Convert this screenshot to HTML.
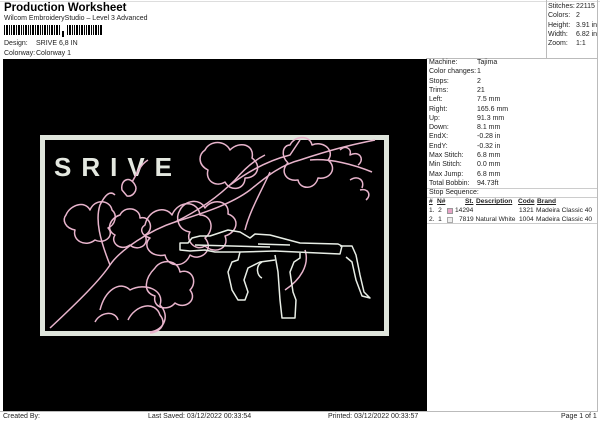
<!DOCTYPE html>
<html><head><meta charset="utf-8"><style>
*{margin:0;padding:0;box-sizing:border-box}
body{width:600px;height:424px;background:#fff;font-family:"Liberation Sans",sans-serif;color:#222;position:relative;overflow:hidden;font-size:7px}
.a{position:absolute;white-space:nowrap}
.r{position:absolute;left:429px;width:168px;height:9.3px;line-height:9.3px}
.r span{position:absolute;left:48px}
.s{font-size:6.6px}
</style></head><body>
<div class="a" style="left:4px;top:2px;font-size:11.5px;font-weight:bold;color:#000">Production Worksheet</div>
<div class="a" style="left:4px;top:15px;font-size:7px">Wilcom EmbroideryStudio – Level 3 Advanced</div>
<svg class="a" style="left:4px;top:25px" width="100" height="13">
<g fill="#000">
<rect x="0" y="0" width="1" height="10"/><rect x="2" y="0" width="2" height="10"/><rect x="5" y="0" width="1" height="10"/><rect x="7" y="0" width="1" height="10"/><rect x="9" y="0" width="2" height="10"/><rect x="12" y="0" width="1" height="10"/><rect x="14" y="0" width="2" height="10"/><rect x="17" y="0" width="1" height="10"/><rect x="19" y="0" width="1" height="10"/><rect x="21" y="0" width="2" height="10"/><rect x="24" y="0" width="1" height="10"/><rect x="26" y="0" width="1" height="10"/><rect x="28" y="0" width="2" height="10"/><rect x="31" y="0" width="1" height="10"/><rect x="33" y="0" width="2" height="10"/><rect x="36" y="0" width="1" height="10"/><rect x="38" y="0" width="1" height="10"/><rect x="40" y="0" width="2" height="10"/><rect x="43" y="0" width="1" height="10"/><rect x="45" y="0" width="1" height="10"/><rect x="47" y="0" width="2" height="10"/><rect x="50" y="0" width="1" height="10"/><rect x="52" y="0" width="2" height="10"/><rect x="55" y="0" width="1" height="10"/><rect x="58" y="6" width="2" height="6"/>
<rect x="63" y="0" width="1" height="10"/><rect x="65" y="0" width="2" height="10"/><rect x="68" y="0" width="1" height="10"/><rect x="70" y="0" width="1" height="10"/><rect x="72" y="0" width="2" height="10"/><rect x="75" y="0" width="1" height="10"/><rect x="77" y="0" width="2" height="10"/><rect x="80" y="0" width="1" height="10"/><rect x="82" y="0" width="1" height="10"/><rect x="84" y="0" width="2" height="10"/><rect x="87" y="0" width="1" height="10"/><rect x="89" y="0" width="1" height="10"/><rect x="91" y="0" width="2" height="10"/><rect x="94" y="0" width="1" height="10"/><rect x="96" y="0" width="2" height="10"/></g></svg>
<div class="a" style="left:4px;top:40px">Design:</div><div class="a" style="left:36px;top:40px">SRIVE 6,8 IN</div>
<div class="a" style="left:4px;top:50px">Colorway:</div><div class="a" style="left:36px;top:50px">Colorway 1</div>
<div class="a" style="left:0;top:1px;width:600px;height:1px;background:#ddd"></div>
<div class="a" style="left:546px;top:0;width:1px;height:58px;background:#bbb"></div>
<div class="a" style="left:597px;top:0;width:1px;height:412px;background:#bbb"></div>
<div class="a" style="left:548px;top:2px;line-height:9.3px">Stitches:<br>Colors:<br>Height:<br>Width:<br>Zoom:</div>
<div class="a" style="left:576px;top:2px;line-height:9.3px">22115<br>2<br>3.91 in<br>6.82 in<br>1:1</div>
<div class="a" style="left:426px;top:58px;width:172px;height:1px;background:#bbb"></div>
<div class="a" style="left:3px;top:59px;width:424px;height:352px;background:#000"></div>
<div class="r" style="top:58px">Machine:<span>Tajima</span></div>
<div class="r" style="top:67.3px">Color changes:<span>1</span></div>
<div class="r" style="top:76.6px">Stops:<span>2</span></div>
<div class="r" style="top:85.9px">Trims:<span>21</span></div>
<div class="r" style="top:95.2px">Left:<span>7.5 mm</span></div>
<div class="r" style="top:104.5px">Right:<span>165.6 mm</span></div>
<div class="r" style="top:113.8px">Up:<span>91.3 mm</span></div>
<div class="r" style="top:123.1px">Down:<span>8.1 mm</span></div>
<div class="r" style="top:132.4px">EndX:<span>-0.28 in</span></div>
<div class="r" style="top:141.7px">EndY:<span>-0.32 in</span></div>
<div class="r" style="top:151px">Max Stitch:<span>6.8 mm</span></div>
<div class="r" style="top:160.3px">Min Stitch:<span>0.0 mm</span></div>
<div class="r" style="top:169.6px">Max Jump:<span>6.8 mm</span></div>
<div class="r" style="top:178.9px">Total Bobbin:<span>94.73ft</span></div>
<div class="a" style="left:427px;top:187.5px;width:170px;height:1px;background:#ccc"></div>
<div class="r" style="top:188px">Stop Sequence:</div>
<div class="a" style="left:427px;top:196.5px;width:170px;height:1px;background:#ccc"></div>
<div class="a s" style="left:429px;top:197px;font-weight:bold;text-decoration:underline;line-height:9px">#</div>
<div class="a s" style="left:437px;top:197px;font-weight:bold;text-decoration:underline;line-height:9px">N#</div>
<div class="a s" style="left:465px;top:197px;font-weight:bold;text-decoration:underline;line-height:9px">St.</div>
<div class="a s" style="left:476px;top:197px;font-weight:bold;text-decoration:underline;line-height:9px">Description</div>
<div class="a s" style="left:518px;top:197px;font-weight:bold;text-decoration:underline;line-height:9px">Code</div>
<div class="a s" style="left:537px;top:197px;font-weight:bold;text-decoration:underline;line-height:9px">Brand</div>
<div class="a s" style="left:429px;top:206px;line-height:9px">1.&nbsp; 2</div>
<div class="a" style="left:447px;top:207.5px;width:6px;height:6px;background:#e7a3c6;border:1px solid #999"></div>
<div class="a s" style="left:455px;top:206px;line-height:9px">14294</div>
<div class="a s" style="left:519px;top:206px;line-height:9px">1321</div>
<div class="a s" style="left:536px;top:206px;line-height:9px">Madeira Classic 40</div>
<div class="a s" style="left:429px;top:215px;line-height:9px">2.&nbsp; 1</div>
<div class="a" style="left:447px;top:216.5px;width:6px;height:6px;background:#eee;border:1px solid #aaa"></div>
<div class="a s" style="left:459px;top:215px;line-height:9px">7819&nbsp;Natural White</div>
<div class="a s" style="left:519px;top:215px;line-height:9px">1004</div>
<div class="a s" style="left:536px;top:215px;line-height:9px">Madeira Classic 40</div>
<div class="a" style="left:427px;top:222.5px;width:170px;height:1px;background:#ccc"></div>
<div class="a" style="left:0;top:411px;width:598px;height:1px;background:#bbb"></div>
<div class="a" style="left:3px;top:413px">Created By:</div>
<div class="a" style="left:148px;top:413px">Last Saved: 03/12/2022 00:33:54</div>
<div class="a" style="left:328px;top:413px">Printed: 03/12/2022 00:33:57</div>
<div class="a" style="left:561px;top:413px">Page 1 of 1</div>
<svg class="a" style="left:0;top:0" width="600" height="424">
<rect x="42.5" y="137.5" width="344" height="196" fill="none" stroke="#dfe5dc" stroke-width="5"/>
<text x="54" y="176" font-family="Liberation Sans,sans-serif" font-size="26" font-weight="bold" fill="#e4e8e0" letter-spacing="10">SRIVE</text>
<g fill="none" stroke="#e8b4cc" stroke-width="1.5" stroke-linejoin="round">
<path d="M50 328 C80 300 100 280 110 265 C120 250 150 230 175 222 C200 214 230 205 250 190 C265 178 280 165 300 160 C330 150 350 145 375 140"/>
<path d="M110 265 C100 240 95 220 100 205 C105 195 110 190 115 195"/>
<path d="M175 222 C200 210 220 195 235 180 C245 168 255 160 265 155"/>
<path d="M230 185 C250 170 270 160 290 155 L300 140 M310 160 C330 158 355 165 372 172"/>
<path d="M66 215 C70 205 85 200 90 210 C95 198 110 200 112 210 C118 215 115 225 108 228 C115 235 105 245 95 240 C85 248 72 240 75 230 C65 228 62 220 66 215Z"/>
<path d="M122 190 C120 180 130 175 135 185 C138 190 133 197 127 196 Z M132 182 C138 172 140 165 148 160"/>
<path d="M145 225 C148 210 165 205 172 215 C178 200 198 200 200 215 C212 215 215 230 205 238 C215 250 200 262 190 255 C185 268 168 268 165 255 C150 258 142 245 150 238 C140 235 140 228 145 225Z"/>
<path d="M180 210 C185 200 200 198 205 208 C212 198 230 200 228 214 C240 218 238 232 225 236 C230 248 215 255 205 246 C195 252 185 240 190 232 C178 230 175 218 180 210Z"/>
<path d="M155 268 C162 258 178 260 180 272 C192 268 198 282 190 290 C198 300 185 310 175 303 C168 312 152 308 155 296 C142 292 145 278 155 268Z"/>
<path d="M120 215 C125 205 140 208 140 218 C150 215 155 230 145 235 C150 245 138 252 130 245 C120 252 110 242 115 235 C105 230 110 218 120 215Z"/>
<path d="M100 310 C105 290 120 280 130 290 C145 282 165 290 160 305 C170 315 165 330 150 332"/>
<path d="M205 150 C210 140 225 140 230 150 C240 140 255 145 252 158 C262 165 258 178 245 178 C245 190 230 192 225 182 C215 188 205 180 208 170 C198 165 198 155 205 150Z"/>
<path d="M290 145 C295 135 310 135 312 145 C325 140 335 152 328 160 C338 168 330 180 318 178 C315 190 300 190 298 180 C285 182 280 170 288 163 C280 155 283 145 290 145Z"/>
<path d="M340 150 C345 145 352 148 350 155 C360 150 365 160 358 165 M350 180 C358 175 365 180 362 188 M360 190 C368 188 372 195 366 200"/>
<path d="M128 320 C135 305 155 300 160 315 C168 325 158 333 150 333 M95 322 C100 312 115 310 118 320"/>
<path d="M270 172 C262 190 250 210 245 230 M285 290 C300 280 310 265 305 250"/>
</g>
<g fill="none" stroke="#e8eee6" stroke-width="1.5" stroke-linejoin="round">
<path d="M180 243 L180 250 L190 251 L205 250 L215 252 L240 252 L275 251 L340 254 L342 246 L338 244 L300 243 L270 235 L255 234 L250 238 L240 232 L228 230 L210 236 L200 236 L192 238 L188 243 Z"/>
<path d="M240 252 L238 260 L232 262 L228 272 L232 290 L238 300 L245 300 L248 292 L244 280 L248 268 L260 262 L275 260"/>
<path d="M275 255 L278 272 L280 300 L282 318 L295 318 L296 300 L293 292 L290 272 L294 262 L300 258 L300 253"/>
<path d="M340 246 L352 246 L356 255 L360 275 L364 292 L370 298 L362 296 L356 280 L352 262 L346 257"/>
<path d="M262 262 C255 266 257 276 262 278 M195 245 L270 247 M258 244 L290 245"/>
</g>
</svg>
</body></html>
